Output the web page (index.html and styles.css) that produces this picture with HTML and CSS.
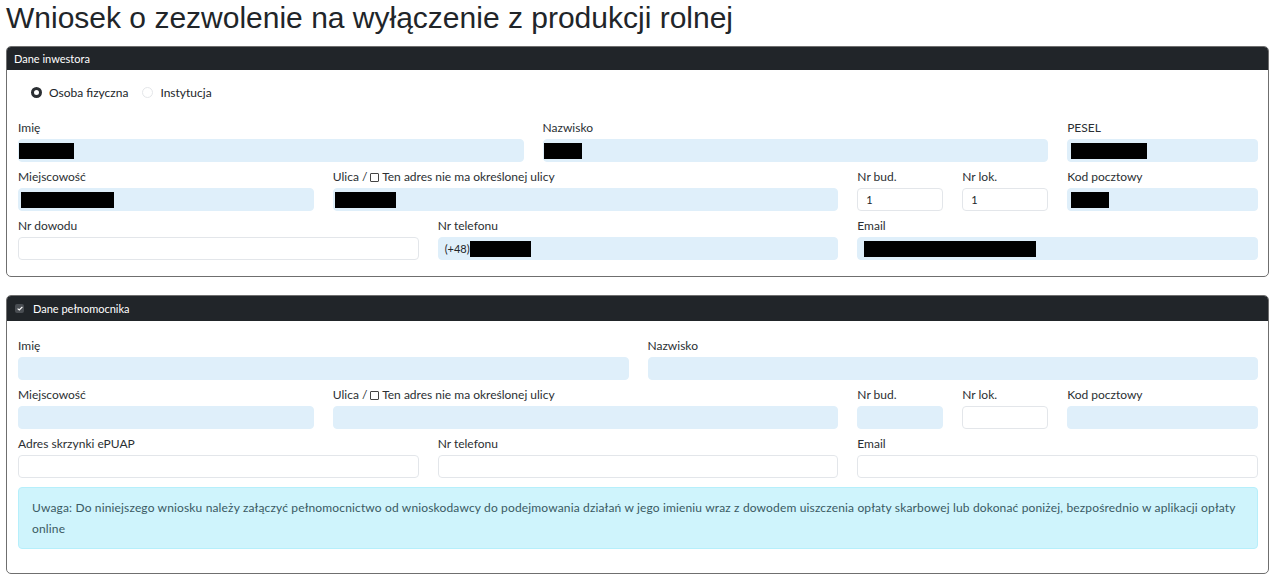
FILE: index.html
```html
<!DOCTYPE html>
<html lang="pl">
<head>
    <meta charset="UTF-8">
    <meta name="viewport" content="width=device-width, initial-scale=1.0">
    <title>Wniosek o zezwolenie na wyłączenie z produkcji rolnej</title>
    <link rel="stylesheet" href="styles.css">
</head>
<body>
    <h1 class="page-title">Wniosek o zezwolenie na wyłączenie z produkcji rolnej</h1>

    <div class="card card-investor">
        <div class="card-header">Dane inwestora</div>
        <div class="card-body">
            <div class="radio-row">
                <label class="radio"><span class="radio-dot checked"></span>Osoba fizyczna</label>
                <label class="radio"><span class="radio-dot"></span>Instytucja</label>
            </div>

            <div class="form-grid">
                <div class="field span-5">
                    <label>Imię</label>
                    <div class="control filled pad-0"><span class="redact" style="width:55px"></span></div>
                </div>
                <div class="field span-5">
                    <label>Nazwisko</label>
                    <div class="control filled pad-0"><span class="redact" style="width:38px"></span></div>
                </div>
                <div class="field span-2">
                    <label>PESEL</label>
                    <div class="control filled pad-4"><span class="redact" style="width:76px"></span></div>
                </div>

                <div class="field span-3">
                    <label>Miejscowość</label>
                    <div class="control filled pad-3"><span class="redact" style="width:93px"></span></div>
                </div>
                <div class="field span-5">
                    <label>Ulica / <span class="box"></span> Ten adres nie ma określonej ulicy</label>
                    <div class="control filled pad-2"><span class="redact" style="width:61px"></span></div>
                </div>
                <div class="field span-1">
                    <label>Nr bud.</label>
                    <div class="control">1</div>
                </div>
                <div class="field span-1">
                    <label>Nr lok.</label>
                    <div class="control">1</div>
                </div>
                <div class="field span-2">
                    <label>Kod pocztowy</label>
                    <div class="control filled pad-4"><span class="redact" style="width:38px"></span></div>
                </div>

                <div class="field span-4">
                    <label>Nr dowodu</label>
                    <div class="control"></div>
                </div>
                <div class="field span-4">
                    <label>Nr telefonu</label>
                    <div class="control filled pad-7">(+48)<span class="redact" style="width:61px"></span></div>
                </div>
                <div class="field span-4">
                    <label>Email</label>
                    <div class="control filled pad-7"><span class="redact" style="width:172px"></span></div>
                </div>
            </div>
        </div>
    </div>

    <div class="card card-proxy">
        <div class="card-header"><span class="toggle">
            <svg width="6" height="5" viewBox="0 0 6 5"><path d="M0.6 2.6 L2.3 4 L5.4 0.9" fill="none" stroke="#fff" stroke-width="1.2"/></svg>
        </span>Dane pełnomocnika</div>
        <div class="card-body">
            <div class="form-grid">
                <div class="field span-6">
                    <label>Imię</label>
                    <div class="control filled"></div>
                </div>
                <div class="field span-6">
                    <label>Nazwisko</label>
                    <div class="control filled"></div>
                </div>

                <div class="field span-3">
                    <label>Miejscowość</label>
                    <div class="control filled"></div>
                </div>
                <div class="field span-5">
                    <label>Ulica / <span class="box"></span> Ten adres nie ma określonej ulicy</label>
                    <div class="control filled"></div>
                </div>
                <div class="field span-1">
                    <label>Nr bud.</label>
                    <div class="control filled"></div>
                </div>
                <div class="field span-1">
                    <label>Nr lok.</label>
                    <div class="control"></div>
                </div>
                <div class="field span-2">
                    <label>Kod pocztowy</label>
                    <div class="control filled"></div>
                </div>

                <div class="field span-4">
                    <label>Adres skrzynki ePUAP</label>
                    <div class="control"></div>
                </div>
                <div class="field span-4">
                    <label>Nr telefonu</label>
                    <div class="control"></div>
                </div>
                <div class="field span-4">
                    <label>Email</label>
                    <div class="control"></div>
                </div>
            </div>

            <div class="alert">
                Uwaga: Do niniejszego wniosku należy załączyć pełnomocnictwo od wnioskodawcy do podejmowania działań w jego imieniu wraz z dowodem uiszczenia opłaty skarbowej lub dokonać poniżej, bezpośrednio w aplikacji opłaty online
            </div>
        </div>
    </div>
</body>
</html>
```

FILE: styles.css
```css
html, body {
    margin: 0;
    background-color: #fff;
}
body {
    padding: 1px 2px 0 6px;
    font-family: "Lato", "Open Sans", sans-serif;
    font-size: 12px;
    color: #212529;
}
.page-title {
    margin: 0 0 11px 0;
    font-family: "Liberation Sans", Arial, sans-serif;
    font-size: 30px;
    font-weight: normal;
    line-height: 34px;
    color: #212529;
}
.card {
    border: 1px solid #6f6f6f;
    border-radius: 5px;
    overflow: hidden;
    margin-bottom: 18px;
}
.card-header {
    background-color: #212529;
    color: #fff;
    font-size: 11px;
    height: 23px;
    padding: 0 7px;
    display: flex;
    align-items: center;
}
.card-proxy .card-header {
    height: 25px;
}
.toggle {
    display: inline-flex;
    align-items: center;
    justify-content: center;
    width: 9px;
    height: 9px;
    border-radius: 2px;
    background-color: #4a4e53;
    margin: 0 9px 0 1px;
}
.card-body {
    padding: 12px 10px 16px 11px;
}
.card-proxy .card-body {
    padding-top: 17px;
    padding-bottom: 24px;
}
.radio-row {
    display: flex;
    align-items: center;
    height: 20px;
    padding-left: 13px;
    margin-bottom: 18px;
}
.radio {
    display: flex;
    align-items: center;
    margin-right: 14px;
}
.radio-dot {
    display: inline-block;
    box-sizing: border-box;
    width: 11px;
    height: 11px;
    border-radius: 50%;
    border: 1px solid #e4e6e9;
    margin-right: 7px;
}
.radio-dot.checked {
    border: 3px solid #2b2f33;
    background-color: #fff;
}
.form-grid {
    display: grid;
    grid-template-columns: repeat(12, 1fr);
    column-gap: 19px;
    row-gap: 7px;
}
.span-1 { grid-column: span 1; }
.span-2 { grid-column: span 2; }
.span-3 { grid-column: span 3; }
.span-4 { grid-column: span 4; }
.span-5 { grid-column: span 5; }
.span-6 { grid-column: span 6; }
.field label {
    display: block;
    line-height: 16px;
    margin-bottom: 3px;
    white-space: nowrap;
    color: #2b2f33;
}
.box {
    display: inline-block;
    width: 7px;
    height: 7px;
    border: 1px solid #444;
    border-radius: 1px;
    vertical-align: -1px;
}
.control {
    box-sizing: border-box;
    height: 23px;
    border: 1px solid #e3e6ea;
    border-radius: 4px;
    background-color: #fff;
    padding: 0 8px;
    display: flex;
    align-items: center;
    font-size: 11px;
}
.control.filled {
    background-color: #dfeffa;
    border-color: #dfeffa;
}
.control.pad-0 { padding-left: 0; }
.control.pad-2 { padding-left: 1px; }
.control.pad-3 { padding-left: 2px; }
.control.pad-4 { padding-left: 3px; }
.control.pad-7 { padding-left: 6px; }
.control .redact {
    display: inline-block;
    height: 16px;
    background-color: #000;
}
.alert {
    margin-top: 9px;
    background-color: #cff4fc;
    border: 1px solid #b6effb;
    border-radius: 4px;
    padding: 9px 13px 9px;
    line-height: 21px;
    font-size: 12px;
    letter-spacing: 0.15px;
    color: #3a5a63;
}
```
